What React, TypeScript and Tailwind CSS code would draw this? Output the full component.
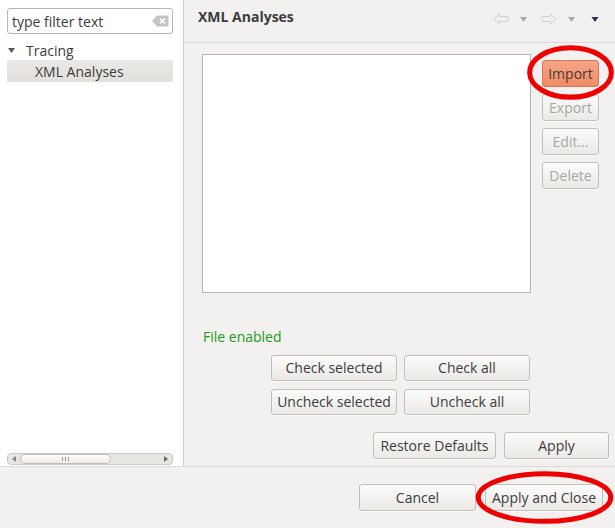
import React from 'react';

const font = { fontFamily: '"Open Sans", "Noto Sans", sans-serif' };

function Btn({
  children,
  className = '',
  disabled = false,
}: {
  children: React.ReactNode;
  className?: string;
  disabled?: boolean;
}) {
  return (
    <button
      type="button"
      className={`flex items-center justify-center rounded-[3px] border border-[#c3bfb9] bg-gradient-to-b from-[#fbfbfa] to-[#ebe9e6] text-[13px] leading-none shadow-[0_1px_0_rgba(255,255,255,0.8)] ${
        disabled ? 'text-[#a8a6a2]' : 'text-[#3c3c3c]'
      } ${className}`}
    >
      {children}
    </button>
  );
}

function NavArrow({ dir }: { dir: 'left' | 'right' }) {
  return (
    <svg width="16" height="12" viewBox="0 0 16 12">
      {dir === 'left' ? (
        <path d="M1 6 L6.5 1 L6.5 3.5 L15 3.5 L15 8.5 L6.5 8.5 L6.5 11 Z" fill="none" stroke="#d3d1cd" strokeWidth="1" />
      ) : (
        <path d="M15 6 L9.5 1 L9.5 3.5 L1 3.5 L1 8.5 L9.5 8.5 L9.5 11 Z" fill="none" stroke="#d3d1cd" strokeWidth="1" />
      )}
    </svg>
  );
}

function Tri({ color, w = 7 }: { color: string; w?: number }) {
  return (
    <svg width={w} height="5" viewBox="0 0 7 5">
      <path d="M0 0 L7 0 L3.5 5 Z" fill={color} />
    </svg>
  );
}

function Ring({ className }: { className: string }) {
  return (
    <svg className={`pointer-events-none absolute ${className}`} viewBox="0 0 100 100" preserveAspectRatio="none">
      <ellipse cx="50" cy="50" rx="47" ry="45" fill="none" stroke="#ee0000" strokeWidth="5" vectorEffect="non-scaling-stroke" />
    </svg>
  );
}

export default function App() {
  return (
    <div className="relative flex h-[528px] w-[615px] flex-col overflow-hidden bg-[#f2f1f0] text-[#3c3c3c]" style={font}>
      <div className="flex h-[467px] border-b border-[#dcd9d5]">
        {/* left tree */}
        <div className="flex w-[184px] flex-col border-r border-[#d3d0cb] bg-white pl-[7px] pr-[10px] pt-[8px]">
          <div className="flex h-[26px] items-center justify-between rounded-[3px] border border-[#b9b6b1] bg-white pl-[4px] pr-[3px]">
            <span className="text-[14px] text-[#3c3c3c]">type filter text</span>
            <svg width="17" height="12" viewBox="0 0 17 12">
              <path d="M0 6 L5 0.5 L15 0.5 Q16.5 0.5 16.5 2 L16.5 10 Q16.5 11.5 15 11.5 L5 11.5 Z" fill="#c6c4c0" />
              <path d="M8 3.5 L13 8.5 M13 3.5 L8 8.5" stroke="#fff" strokeWidth="1.6" />
            </svg>
          </div>
          <div className="mt-[7px] flex h-[19px] items-center">
            <span className="ml-[1px] mr-[11px]">
              <Tri color="#5a5a5a" />
            </span>
            <span className="text-[14px]">Tracing</span>
          </div>
          <div className="flex h-[22px] items-center bg-gradient-to-b from-[#ebe9e6] to-[#e2e0dc] pl-[28px]">
            <span className="text-[14px]">XML Analyses</span>
          </div>
          <div className="flex-1" />
          <div className="mb-[1px] flex h-[12px] items-center rounded-[4px] border border-[#cdcac5] bg-[#e8e6e3]">
            <span className="flex w-[12px] justify-center">
              <svg width="4" height="6" viewBox="0 0 4 6">
                <path d="M4 0 L0 3 L4 6 Z" fill="#8a8883" />
              </svg>
            </span>
            <div className="flex h-[10px] w-[91px] items-center justify-center gap-[2px] rounded-[5px] border border-[#c2bfba] bg-gradient-to-b from-[#fdfdfc] to-[#eeece9]">
              <span className="h-[4px] w-px bg-[#9a9893]" />
              <span className="h-[4px] w-px bg-[#9a9893]" />
              <span className="h-[4px] w-px bg-[#9a9893]" />
            </div>
            <div className="flex-1" />
            <span className="flex w-[12px] justify-center">
              <svg width="4" height="6" viewBox="0 0 4 6">
                <path d="M0 0 L4 3 L0 6 Z" fill="#6a6863" />
              </svg>
            </span>
          </div>
        </div>

        {/* right page */}
        <div className="flex flex-1 flex-col">
          <div className="flex h-[43px] justify-between border-b border-[#dcd9d5] pl-[14px] pr-[16px] pt-[6px]">
            <span className="text-[14px] font-bold text-[#3c3c3c]">XML Analyses</span>
            <div className="mt-[7px] flex h-[12px] items-center">
              <NavArrow dir="left" />
              <span className="ml-[11px] mr-[14px]">
                <Tri color="#aaa8a4" />
              </span>
              <NavArrow dir="right" />
              <span className="ml-[11px] mr-[16px]">
                <Tri color="#aaa8a4" />
              </span>
              <Tri color="#3a2a5e" w={8} />
            </div>
          </div>

          <div className="flex flex-1 flex-col pl-[18px] pr-[6px] pt-[11px]">
            <div className="flex">
              <div className="h-[239px] w-[329px] border border-[#b8b5b0] bg-white" />
              <div className="ml-[11px] mt-[6px] flex flex-col gap-[7px]">
                <button
                  type="button"
                  className="flex h-[27px] w-[57px] items-center justify-center rounded-[3px] border border-[#d2795a] bg-gradient-to-b from-[#f7a587] to-[#f08c66] text-[14px] text-[#4a3a34]"
                >
                  Import
                </button>
                <Btn disabled className="h-[27px] w-[57px] text-[14px]">
                  Export
                </Btn>
                <Btn disabled className="h-[27px] w-[57px] text-[14px]">
                  Edit...
                </Btn>
                <Btn disabled className="h-[27px] w-[57px] text-[14px]">
                  Delete
                </Btn>
              </div>
            </div>

            <div className="ml-[1px] mt-[33px] text-[14px] text-[#1c9a1c]">File enabled</div>

            <div className="ml-[69px] mt-[8px] grid w-[259px] grid-cols-2 gap-x-[7px] gap-y-[8px]">
              <Btn className="h-[26px] text-[14px]">Check selected</Btn>
              <Btn className="h-[26px] text-[14px]">Check all</Btn>
              <Btn className="h-[26px] text-[14px]">Uncheck selected</Btn>
              <Btn className="h-[26px] text-[14px]">Uncheck all</Btn>
            </div>

            <div className="mt-[17px] flex justify-end gap-[8px]">
              <Btn className="h-[27px] w-[123px] text-[14px]">Restore Defaults</Btn>
              <Btn className="h-[27px] w-[105px] text-[14px]">Apply</Btn>
            </div>
          </div>
        </div>
      </div>

      <div className="flex flex-1 items-start justify-end gap-[9px] pr-[12px] pt-[17px]">
        <Btn className="h-[27px] w-[117px] text-[14px]">Cancel</Btn>
        <Btn className="h-[27px] w-[118px] text-[14px]">Apply and Close</Btn>
      </div>

      <Ring className="left-[527px] top-[45px] h-[55px] w-[87px]" />
      <Ring className="left-[474px] top-[471px] h-[53px] w-[141px]" />
    </div>
  );
}
